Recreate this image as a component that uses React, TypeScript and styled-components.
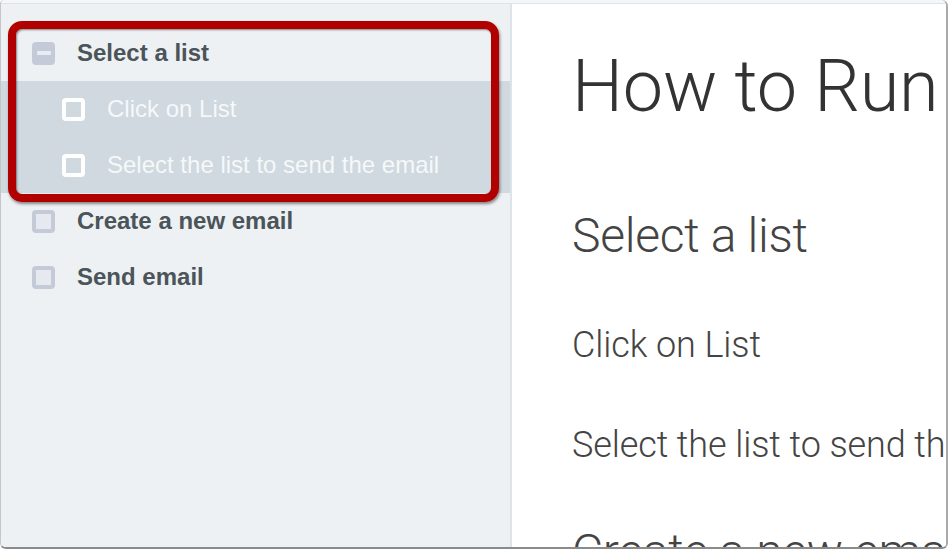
import React from 'react'
import styled, { createGlobalStyle, css } from 'styled-components'

const GlobalStyle = createGlobalStyle`
  html, body {
    margin: 0;
    padding: 0;
    background: #ffffff;
  }
  body {
    font-family: "Liberation Sans", Arial, sans-serif;
  }
`

type Step = {
  title: string
  state: 'open' | 'closed'
  children?: string[]
}

const steps: Step[] = [
  {
    title: 'Select a list',
    state: 'open',
    children: ['Click on List', 'Select the list to send the email'],
  },
  { title: 'Create a new email', state: 'closed' },
  { title: 'Send email', state: 'closed' },
]

const Window = styled.div`
  box-sizing: border-box;
  width: 948px;
  height: 549px;
  padding-top: 3px;
  background: #f4f6f8;
  border-left: 1px solid #c6c6c6;
  border-right: 2px solid #a9a9a9;
  border-bottom: 2px solid #8b8b8b;
  border-radius: 4px 6px 6px 6px;
  overflow: hidden;
  display: flex;
  flex-direction: column;
`

const Body = styled.div`
  flex: 1;
  display: grid;
  grid-template-columns: 511px 1fr;
  border-top: 1px solid #dde3e8;
  min-height: 0;
`

const Sidebar = styled.nav`
  position: relative;
  background: #edf1f4;
  border-right: 2px solid #dce3e9;
  padding-top: 21px;
`

const Row = styled.div<{ $sub?: boolean }>`
  display: flex;
  align-items: center;
  height: 56px;
  gap: 22px;
  padding-left: ${(p) => (p.$sub ? 61 : 31)}px;
  ${(p) =>
    p.$sub &&
    css`
      background: #cfd9df;
    `}
`

const Label = styled.span<{ $sub?: boolean }>`
  font-size: 24px;
  font-weight: ${(p) => (p.$sub ? 400 : 700)};
  color: ${(p) => (p.$sub ? '#f6f8f9' : '#4b5459')};
  white-space: nowrap;
`

const Box = styled.span<{ $variant: 'minus' | 'empty' | 'sub' }>`
  box-sizing: border-box;
  flex: none;
  width: 23px;
  height: 23px;
  border-radius: 4px;
  display: flex;
  align-items: center;
  justify-content: center;
  ${(p) =>
    p.$variant === 'minus' &&
    css`
      background: #c5cad9;
    `}
  ${(p) =>
    p.$variant === 'empty' &&
    css`
      border: 4px solid #c5cad9;
      background: #e6e9ef;
    `}
  ${(p) =>
    p.$variant === 'sub' &&
    css`
      border: 4px solid #ffffff;
      background: transparent;
    `}
`

const Minus = styled.span`
  width: 14px;
  height: 4px;
  background: #e9ecf2;
  border-radius: 1px;
`

// red annotation drawn over the first group of the outline
const Callout = styled.div`
  position: absolute;
  left: 7px;
  top: 17px;
  width: 491px;
  height: 181px;
  box-sizing: border-box;
  border: 8px solid #b10000;
  border-radius: 14px;
  box-shadow: 1px 2px 3px rgba(0, 0, 0, 0.45), inset 1px 1px 2px rgba(0, 0, 0, 0.45);
  pointer-events: none;
`

const Content = styled.main`
  background: #ffffff;
  padding: 47px 0 0 60px;
  overflow: hidden;
  white-space: nowrap;
  font-family: Roboto, "Liberation Sans", sans-serif;
  font-weight: 300;
`

const Title = styled.h1`
  margin: 0 0 88px;
  font-size: 72px;
  line-height: 1;
  font-weight: 300;
  color: #333333;
  letter-spacing: -0.2px;
`

const Heading = styled.h2`
  margin: 0 0 66px;
  font-size: 48px;
  line-height: 1.04;
  font-weight: 300;
  color: #444444;
  letter-spacing: -0.3px;
`

const SubHeading = styled.h3`
  margin: 0 0 64px;
  font-size: 36px;
  line-height: 1;
  font-weight: 300;
  color: #444444;
  letter-spacing: -0.1px;
`

export default function App() {
  return (
    <>
      <GlobalStyle />
      <Window>
        <Body>
          <Sidebar>
            {steps.map((step) => (
              <React.Fragment key={step.title}>
                <Row>
                  <Box $variant={step.state === 'open' ? 'minus' : 'empty'}>
                    {step.state === 'open' && <Minus />}
                  </Box>
                  <Label>{step.title}</Label>
                </Row>
                {step.children?.map((child) => (
                  <Row $sub key={child}>
                    <Box $variant="sub" />
                    <Label $sub>{child}</Label>
                  </Row>
                ))}
              </React.Fragment>
            ))}
            <Callout />
          </Sidebar>
          <Content>
            <Title>How to Run an Email Campaign</Title>
            {steps.map((step) => (
              <React.Fragment key={step.title}>
                <Heading>{step.title}</Heading>
                {step.children?.map((child) => (
                  <SubHeading key={child}>{child}</SubHeading>
                ))}
              </React.Fragment>
            ))}
          </Content>
        </Body>
      </Window>
    </>
  )
}
